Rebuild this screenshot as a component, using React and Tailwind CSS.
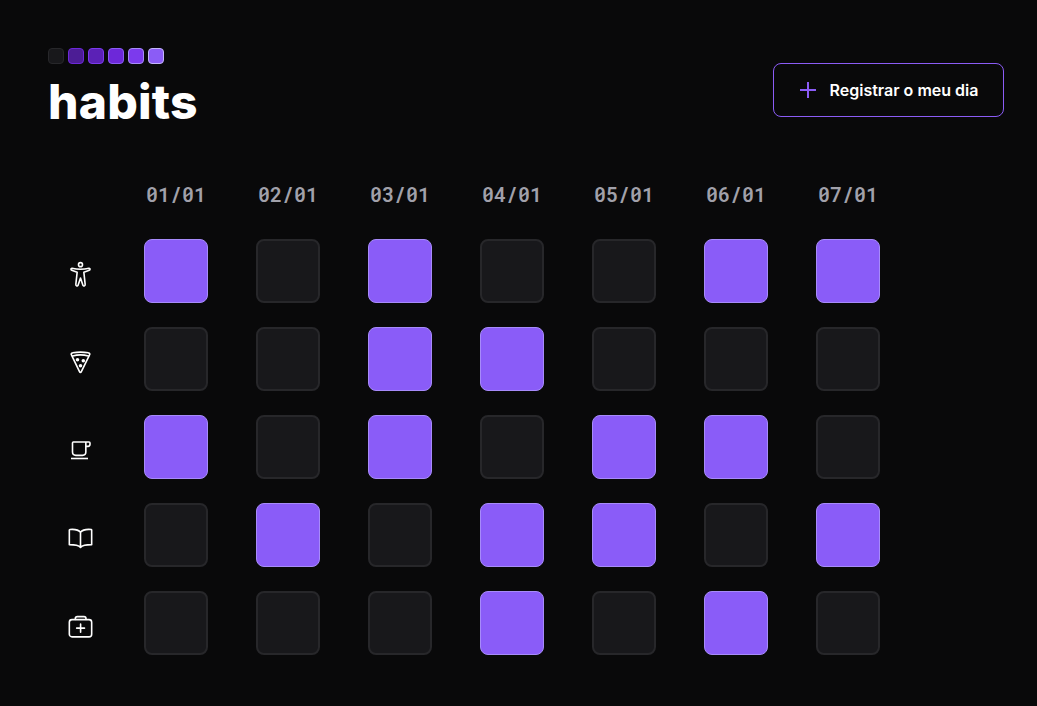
import React from "react";

const days = ["01/01", "02/01", "03/01", "04/01", "05/01", "06/01", "07/01"];

const icon = "block h-10 w-10 fill-none stroke-white";
const strokeProps = { strokeWidth: 4.8, strokeLinecap: "round", strokeLinejoin: "round" };

function PersonIcon() {
  return (
    <svg className={icon} viewBox="0 0 120 120" {...strokeProps}>
      <circle cx="61.5" cy="29" r="6" />
      <path d="M36 40C32 39.500 32 45 35 46L51.500 51.500L47.500 88C47 93 53 95 54.500 90L61.500 69L68.500 90C70 95 76 93 75.500 88L71.500 51.500L88 46C91 45 91 39.500 87 40C71 43.500 52 43.500 36 40Z" />
    </svg>
  );
}

function PizzaIcon() {
  return (
    <svg className={icon} viewBox="0 0 120 120" {...strokeProps}>
      <path d="M35 37C32 33 34 30 38 29.500C54 26.500 69 26.500 85 29.500C89 30 91 33 88 37L64 86C62.500 89 60 89 58.500 86Z" />
      <path d="M38 39C54 34.500 69 34.500 85 39" />
      <g className="fill-white stroke-none">
        <circle cx="52.500" cy="50" r="5.300" />
        <circle cx="70" cy="53" r="5.300" />
        <circle cx="61.500" cy="68" r="5.300" />
      </g>
    </svg>
  );
}

function CupIcon() {
  return (
    <svg className={icon} viewBox="0 3 120 120" {...strokeProps} strokeLinecap="butt">
      <path d="M37.500 39Q37.500 36 40 36H87Q90 36 90 39V43Q90 49 84 49H78M77.500 36V66Q77.500 76 67.500 76H47.500Q37.500 76 37.500 66V38" />
      <path d="M33 85.500H84" />
    </svg>
  );
}

function BookIcon() {
  return (
    <svg className={icon} viewBox="0 3 120 120" {...strokeProps}>
      <path d="M61.500 43C56 36 47 34 37 34Q28 34 28 36V80C42 80 54 80 61.500 88C69 80 81 80 95 80V36Q95 34 86 34C76 34 67 36 61.500 43ZM61.500 43V87" />
    </svg>
  );
}

function KitIcon() {
  return (
    <svg className={icon} viewBox="0 3 120 120" {...strokeProps}>
      <rect x="28" y="41" width="67" height="51.500" rx="8" />
      <path d="M46 40V38Q46 32 52 32H72Q78 32 78 38V40" />
      <path d="M50 66.500H73.500M61.800 54.500V78.500" />
    </svg>
  );
}

const habits = [
  { name: "exercise", Icon: PersonIcon, done: [1, 0, 1, 0, 0, 1, 1] },
  { name: "food", Icon: PizzaIcon, done: [0, 0, 1, 1, 0, 0, 0] },
  { name: "coffee", Icon: CupIcon, done: [1, 0, 1, 0, 1, 1, 0] },
  { name: "reading", Icon: BookIcon, done: [0, 1, 0, 1, 1, 0, 1] },
  { name: "health", Icon: KitIcon, done: [0, 0, 0, 1, 0, 1, 0] },
];

const levels = [
  "bg-zinc-900 border-zinc-800",
  "bg-[#4c1d95] border-[#6d28d9]",
  "bg-[#5b21b6] border-[#7c3aed]",
  "bg-[#6d28d9] border-[#8b5cf6]",
  "bg-[#7c3aed] border-[#a78bfa]",
  "bg-[#8b5cf6] border-[#c4b5fd]",
];

export default function App() {
  return (
    <main className="h-[706px] w-[1037px] overflow-hidden bg-[#09090a] pl-12 pt-12 font-['Inter',sans-serif] text-white">
      <header className="flex w-[956px] justify-between">
        <div>
          <div className="flex gap-1">
            {levels.map((level) => (
              <span key={level} className={`h-4 w-4 rounded-[4px] border ${level}`} />
            ))}
          </div>
          <h1 className="mt-[9px] text-[48px] font-extrabold leading-[58px] tracking-[0.2px]">habits</h1>
        </div>
        <button className="mt-[15px] flex h-[54px] w-[231px] items-center gap-[11.5px] rounded-lg border border-[#8b5cf6] pl-6 text-base font-semibold">
          <svg className="h-5 w-5 fill-none stroke-[#8b5cf6]" viewBox="0 0 20 20" strokeWidth="2">
            <path d="M2 10H18M10 2V18" />
          </svg>
          Registrar o meu dia
        </button>
      </header>
      <div className="mt-[49px] flex gap-12 pl-24">
        {days.map((day) => (
          <span key={day} className="w-16 text-center font-['Roboto_Mono','Liberation_Mono',monospace] text-xl font-semibold leading-7 text-[#a1a1aa]">
            {day}
          </span>
        ))}
      </div>
      <div className="mt-[31px] flex flex-col gap-6">
        {habits.map(({ name, Icon, done }) => (
          <div key={name} className="flex gap-8">
            <div className="flex h-16 w-16 justify-center pt-4"><Icon /></div>
            <div className="flex gap-12">
              {done.map((d, i) => (
                <span
                  key={i}
                  className={d ? "h-16 w-16 rounded-lg border border-[#a78bfa] bg-[#8a5cf8]" : "h-16 w-16 rounded-lg border-2 border-zinc-800 bg-zinc-900"}
                />
              ))}
            </div>
          </div>
        ))}
      </div>
    </main>
  );
}
